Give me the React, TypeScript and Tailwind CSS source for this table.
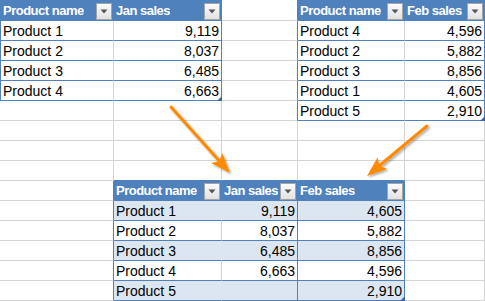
import React from "react";

// Excel-like sheet: 5 columns x 15 rows, three tables sitting on it, two arrows on top.

interface SheetTable {
  r0: number;
  c0: number;
  head: string[];
  rows: string[][];
  banded: boolean;
  /** table-relative column whose right edge gets a blue line */
  innerBlue?: number;
}

const TABLES: SheetTable[] = [
  {
    r0: 0,
    c0: 0,
    head: ["Product name", "Jan sales"],
    rows: [
      ["Product 1", "9,119"],
      ["Product 2", "8,037"],
      ["Product 3", "6,485"],
      ["Product 4", "6,663"],
    ],
    banded: false,
  },
  {
    r0: 0,
    c0: 3,
    head: ["Product name", "Feb sales"],
    rows: [
      ["Product 4", "4,596"],
      ["Product 2", "5,882"],
      ["Product 3", "8,856"],
      ["Product 1", "4,605"],
      ["Product 5", "2,910"],
    ],
    banded: false,
  },
  {
    r0: 9,
    c0: 1,
    head: ["Product name", "Jan sales", "Feb sales"],
    rows: [
      ["Product 1", "9,119", "4,605"],
      ["Product 2", "8,037", "5,882"],
      ["Product 3", "6,485", "8,856"],
      ["Product 4", "6,663", "4,596"],
      ["Product 5", "", "2,910"],
    ],
    banded: true,
    innerBlue: 1,
  },
];

const ROWS = 15;
const COLS = 5;

function findTable(r: number, c: number) {
  for (const t of TABLES) {
    const tr = r - t.r0;
    const tc = c - t.c0;
    if (tr >= 0 && tr <= t.rows.length && tc >= 0 && tc < t.head.length) {
      return { t, tr, tc };
    }
  }
  return null;
}

function FilterButton() {
  return (
    <span className="ml-auto mr-[1px] flex h-[17px] w-[16px] shrink-0 items-center justify-center border border-[#a5a5a5] bg-gradient-to-b from-[#fbfbfb] to-[#e2e2e2]">
      <svg width="8" height="5" viewBox="0 0 8 5" className="-mt-px">
        <polygon points="0.5,0.5 7.5,0.5 4,4.5" fill="#555555" />
      </svg>
    </span>
  );
}

function ResizeHandle() {
  return (
    <span className="absolute -bottom-px -right-px h-[5px] w-[5px] bg-[#3a64a8] [clip-path:polygon(100%_0,100%_100%,0_100%)]" />
  );
}

function Cell({ r, c }: { r: number; c: number }) {
  const hit = findTable(r, c);

  if (!hit) {
    const leftOfTable = TABLES.some(
      (t) => c === t.c0 - 1 && r >= t.r0 && r <= t.r0 + t.rows.length
    );
    const aboveTable = TABLES.some(
      (t) => r === t.r0 - 1 && c >= t.c0 && c < t.c0 + t.head.length
    );
    return (
      <div
        className={`border-r border-b bg-white ${
          leftOfTable ? "border-r-[#4f81bd]" : "border-r-[#d4d4d4]"
        } ${aboveTable ? "border-b-[#4f81bd]" : "border-b-[#d4d4d4]"}`}
      />
    );
  }

  const { t, tr, tc } = hit;
  const firstCol = tc === 0 && t.c0 === 0;
  const lastCol = tc === t.head.length - 1;

  if (tr === 0) {
    return (
      <div
        className={`flex items-end overflow-hidden border-r border-b border-r-[#4f81bd] border-b-[#4f81bd] bg-[#4f81bd] ${
          firstCol ? "border-l border-l-[#4f81bd]" : ""
        }`}
      >
        <span className="overflow-hidden whitespace-nowrap pl-[2px] text-[13px] font-bold leading-[18px] tracking-[-0.5px] text-white">
          {t.head[tc]}
        </span>
        <FilterButton />
      </div>
    );
  }

  const band = t.banded && tr % 2 === 1;
  const blueRight = lastCol || t.innerBlue === tc;
  const rightClass = blueRight
    ? "border-r-[#4f81bd]"
    : band
    ? "border-r-[#dce6f1]"
    : "border-r-[#d4d4d4]";
  const isNumber = tc > 0;
  const isLast = lastCol && tr === t.rows.length;

  return (
    <div
      className={`relative flex items-end border-r border-b border-b-[#4f81bd] ${rightClass} ${
        band ? "bg-[#dce6f1]" : "bg-white"
      } ${firstCol ? "border-l border-l-[#4f81bd]" : ""} ${
        isNumber ? "justify-end pr-[2px]" : "pl-[2px]"
      }`}
    >
      <span className="whitespace-nowrap leading-[18px]">{t.rows[tr - 1][tc]}</span>
      {isLast && <ResizeHandle />}
    </div>
  );
}

function Arrow({ x1, y1, x2, y2 }: { x1: number; y1: number; x2: number; y2: number }) {
  const dx = x2 - x1;
  const dy = y2 - y1;
  const len = Math.hypot(dx, dy);
  const ux = dx / len;
  const uy = dy / len;
  const headLen = 20;
  const half = 7.5;
  const bx = x2 - ux * headLen;
  const by = y2 - uy * headLen;
  const nx = bx + ux * 4;
  const ny = by + uy * 4;
  const w1 = `${bx - uy * half},${by + ux * half}`;
  const w2 = `${bx + uy * half},${by - ux * half}`;
  return (
    <g filter="url(#shadow)">
      <line
        x1={x1}
        y1={y1}
        x2={nx}
        y2={ny}
        stroke="#ff8a00"
        strokeWidth={3}
        strokeLinecap="round"
      />
      <polygon points={`${x2},${y2} ${w1} ${nx},${ny} ${w2}`} fill="#ff8a00" />
    </g>
  );
}

export default function App() {
  const cells: React.ReactNode[] = [];
  for (let r = 0; r < ROWS; r++) {
    for (let c = 0; c < COLS; c++) {
      cells.push(<Cell key={`${r}-${c}`} r={r} c={c} />);
    }
  }

  return (
    <div className="relative h-[301px] w-[485px] overflow-hidden bg-white font-['Liberation_Sans',Arial,sans-serif] text-[14px] text-black">
      <div className="grid grid-cols-[114px_108px_76px_107px_80px] grid-rows-[21px_repeat(14,20px)]">
        {cells}
      </div>

      <svg
        className="pointer-events-none absolute inset-0"
        width="485"
        height="301"
        viewBox="0 0 485 301"
      >
        <defs>
          <filter id="shadow" x="-20%" y="-20%" width="140%" height="140%">
            <feDropShadow dx="1.5" dy="1.5" stdDeviation="1.2" floodColor="#000" floodOpacity="0.35" />
          </filter>
        </defs>
        <Arrow x1={171} y1={107} x2={230} y2={173} />
        <Arrow x1={427} y1={126} x2={367} y2={176} />
      </svg>
    </div>
  );
}
